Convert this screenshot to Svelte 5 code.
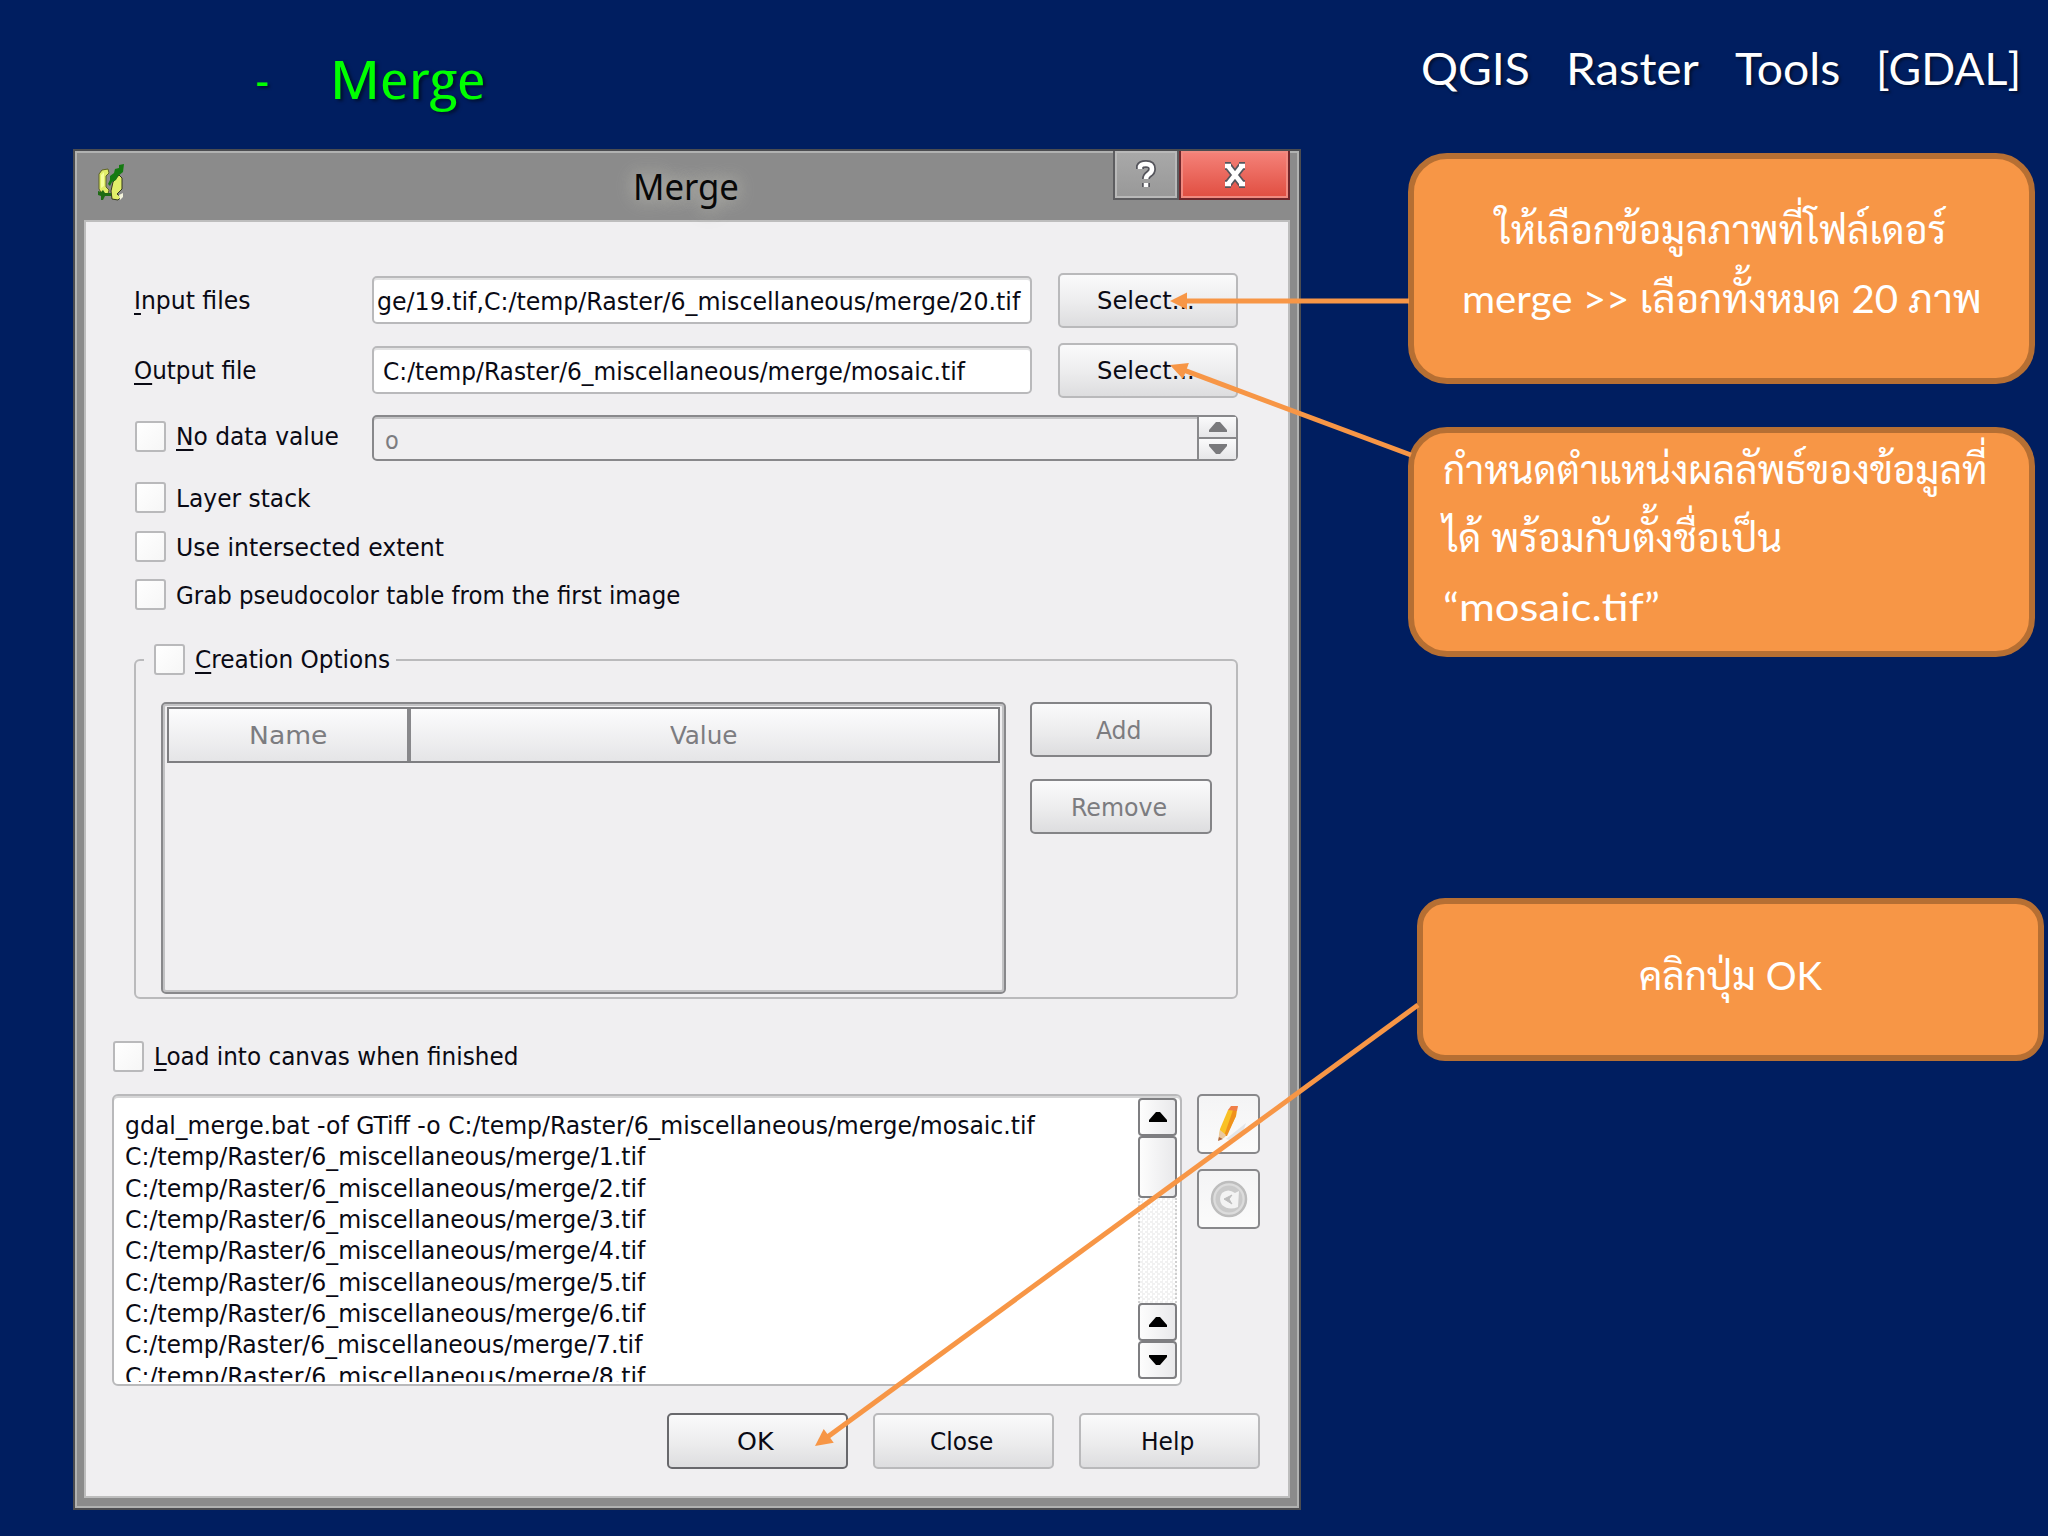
<script lang="ts">
  const folder = 'C:/temp/Raster/6_miscellaneous/merge/';

  const options = [
    { label: 'Layer stack', width: 135 },
    { label: 'Use intersected extent', width: 268 },
    { label: 'Grab pseudocolor table from the first image', width: 504 }
  ];

  const command = [
    { text: `gdal_merge.bat -of GTiff -o ${folder}mosaic.tif`, width: 910 },
    ...[1, 2, 3, 4, 5, 6, 7, 8].map((n) => ({
      text: `${folder}${n}.tif`,
      width: n === 7 ? 517 : 520
    }))
  ];

  const arrows = [
    { from: [1409, 301], to: [1170, 301] },
    { from: [1411, 455], to: [1170, 365] },
    { from: [1418, 1005], to: [815, 1446] }
  ].map(({ from, to }) => {
    const angle = Math.atan2(to[1] - from[1], to[0] - from[0]);
    return {
      x1: from[0],
      y1: from[1],
      x2: to[0] - 12 * Math.cos(angle),
      y2: to[1] - 12 * Math.sin(angle),
      head: `translate(${to[0]} ${to[1]}) rotate(${(angle * 180) / Math.PI})`
    };
  });

  // squeeze or stretch a line of text to the given width
  function fit(node: HTMLElement, width: number) {
    const natural = node.offsetWidth;
    node.style.transform = `scaleX(${width / natural})`;
    node.style.marginRight = `${width - natural}px`;
  }
</script>

{#snippet line(text: string, width: number, key = false)}
  <span class="fit" use:fit={width}>{#if key}<u>{text[0]}</u>{text.slice(1)}{:else}{text}{/if}</span>
{/snippet}

{#snippet triangle(down = false)}
  <svg class="triangle" class:down width="18" height="10" viewBox="0 0 18 10">
    <path d="M9 0 L11 0 L18 8 V10 H0 V8 L7 0 Z" />
  </svg>
{/snippet}

<div class="slide">
  <header>
    <h2><span class="dash">-</span>{@render line('Merge', 156)}</h2>
    <h1>
      {@render line('QGIS', 109)}
      {@render line('Raster', 133)}
      {@render line('Tools', 105)}
      {@render line('[GDAL]', 145)}
    </h1>
  </header>

  <main>
    <section class="window">
      <div class="titlebar">
        <svg class="logo" width="28" height="38" viewBox="0 0 28 38">
          <path d="M2 10 L5 6 L11 5 L12 9 L9 12 L9 23 L12 26 L11 30 L5 30 L2 25 Z" fill="#e2ee6a" stroke="#5d6224" />
          <path d="M16 18 L22 11 L25 14 V25 L20 30 L24 33 L21 36 L15 35 L14 27 Z" fill="#e2ee6a" stroke="#33371c" />
          <path d="M4 11 L7 8 L7 22 L4 24 Z" fill="#f6ff9c" />
          <path d="M11 20 L13 16 L13 12 L17 9 L18 5 L22 4 L22 1 L27 0 L26 8 L21 12 L19 16 L15 18 L13 22 Z" fill="#157a12" />
          <path d="M1 27 L4 28 L6 26 L8 29 L14 29 L14 32 L8 32 L6 36 L4 36 L4 32 L1 31 Z" fill="#1f6b14" />
          <path d="M22 31 L26 29 L26 33 L23 36 Z" fill="#f4f4dc" />
        </svg>
        <span class="title">{@render line('Merge', 106)}</span>
        <div class="controls">
          <button class="help" aria-label="Help">
            <svg width="22" height="30" viewBox="0 0 22 30">
              <path d="M5 9 V6.500 Q6 4 11 4 Q17 4 17 9 Q17 12 14 14 Q11 16 11 19 M11 23 V27" />
              <path class="top" d="M5 9 V6.500 Q6 4 11 4 Q17 4 17 9 Q17 12 14 14 Q11 16 11 19 M11 23 V27" />
            </svg>
          </button>
          <button class="close" aria-label="Close">
            <svg width="28" height="26" viewBox="0 0 28 26">
              <path d="M7 4 L21 22 M21 4 L7 22 M4 4 H10 M18 4 H24 M4 22 H10 M18 22 H24" />
              <path class="top" d="M7 4 L21 22 M21 4 L7 22 M4 4 H10 M18 4 H24 M4 22 H10 M18 22 H24" />
            </svg>
          </button>
        </div>
      </div>

      <div class="body">
        <div class="row">
          <span class="label">{@render line('Input files', 116, true)}</span>
          <div class="field scrolled">{@render line(`ge/19.tif,${folder}20.tif`, 643)}</div>
          <button class="push">{@render line('Select...', 98)}</button>
        </div>
        <div class="row second">
          <span class="label">{@render line('Output file', 123, true)}</span>
          <div class="field">{@render line(`${folder}mosaic.tif`, 582)}</div>
          <button class="push">{@render line('Select...', 98)}</button>
        </div>
        <div class="row nodata">
          <label class="check label"><i></i>{@render line('No data value', 163, true)}</label>
          <div class="spin">
            <span class="zero">o</span>
            <div class="steps">
              <b>{@render triangle()}</b>
              <b>{@render triangle(true)}</b>
            </div>
          </div>
        </div>

        <div class="options">
          {#each options as option}
            <label class="check"><i></i>{@render line(option.label, option.width)}</label>
          {/each}
        </div>

        <fieldset>
          <legend class="check"><i></i>{@render line('Creation Options', 195, true)}</legend>
          <div class="creation">
            <div class="table">
              <div class="head">
                <span class="name">{@render line('Name', 78)}</span>
                <span class="value">{@render line('Value', 68)}</span>
              </div>
            </div>
            <div class="side">
              <button class="push disabled">{@render line('Add', 46)}</button>
              <button class="push disabled">{@render line('Remove', 96)}</button>
            </div>
          </div>
        </fieldset>

        <label class="check load"><i></i>{@render line('Load into canvas when finished', 364, true)}</label>

        <div class="output">
          <div class="log">
            <div class="lines">
              {#each command as entry}
                <div>{@render line(entry.text, entry.width)}</div>
              {/each}
            </div>
            <div class="scrollbar">
              <b>{@render triangle()}</b>
              <b class="thumb"></b>
              <span class="track"></span>
              <b>{@render triangle()}</b>
              <b>{@render triangle(true)}</b>
            </div>
          </div>
          <div class="tools">
            <button aria-label="Edit">
              <svg width="42" height="46" viewBox="0 0 42 46">
                <path d="M18 38 L38 22 L34 34 L24 40 Z" fill="#dcdee2" opacity="0.7" />
                <path d="M20 9 L29 6 L28 15 L18 35 L11 38 L12 28 Z" fill="#f9c125" />
                <path d="M25 9 L29 7 L28 15 L19 35 L16 35 Z" fill="#f0921c" />
                <path d="M20 9 L23 5 L30 5 L29 10 Z" fill="#f07f48" />
                <path d="M12 29 L18 34 L16 37 L10 39 Z" fill="#ebc9a0" />
                <path d="M10 40 L11 36 L15 38 Z" fill="#b0683f" />
              </svg>
            </button>
            <button aria-label="Reset">
              <svg width="42" height="42" viewBox="0 0 42 42">
                <circle cx="21" cy="21" r="17" fill="#dcdcdc" stroke="#bdbdbd" stroke-width="2.500" />
                <circle cx="21" cy="21" r="13.500" fill="#cacaca" />
                <path d="M31 13 L30 29 Q21 33 14 27 Q10 21 14 15 Q20 10 27 15 Z" fill="#f3f3f3" />
                <path d="M24 17 L16 21 L24 26 L21 21 Z" fill="#bdbdbd" stroke="#bdbdbd" />
              </svg>
            </button>
          </div>
        </div>

        <div class="buttons">
          <button class="push default">{@render line('OK', 36)}</button>
          <button class="push">{@render line('Close', 63)}</button>
          <button class="push">{@render line('Help', 53)}</button>
        </div>
      </div>
    </section>

    <aside>
      <div class="note first">
        <p>{@render line('ให้เลือกข้อมูลภาพที่โฟล์เดอร์', 450)}</p>
        <p>{@render line('merge >> เลือกทั้งหมด 20 ภาพ', 520)}</p>
      </div>
      <div class="note left">
        <p>{@render line('กำหนดตำแหน่งผลลัพธ์ของข้อมูลที่', 544)}</p>
        <p>{@render line('ได้ พร้อมกับตั้งชื่อเป็น', 339)}</p>
        <p>{@render line('“mosaic.tif”', 217)}</p>
      </div>
      <div class="note last">
        <p>{@render line('คลิกปุ่ม OK', 183)}</p>
      </div>
    </aside>
  </main>

  <svg class="arrows" width="2048" height="1536" viewBox="0 0 2048 1536">
    {#each arrows as arrow}
      <line x1={arrow.x1} y1={arrow.y1} x2={arrow.x2} y2={arrow.y2} />
      <path d="M0 0 L-17 -8.500 V8.500 Z" transform={arrow.head} />
    {/each}
  </svg>
</div>

<style>
  :global(body) {
    background: #001e60;
  }

  .slide {
    position: relative;
    box-sizing: border-box;
    width: 2048px;
    height: 1536px;
    overflow: hidden;
    background: #001e60;
    font-family: 'DejaVu Sans Condensed', 'DejaVu Sans', sans-serif;
    font-stretch: condensed;
    font-size: 25px;
    color: #0a0a14;
  }

  .slide :global(*) {
    box-sizing: border-box;
  }

  .fit {
    display: inline-block;
    flex: none;
    transform-origin: 0 50%;
    white-space: pre;
  }

  u {
    text-decoration-thickness: 2px;
    text-underline-offset: 4px;
  }

  header {
    display: flex;
    justify-content: space-between;
    height: 149px;
    padding: 0 27px 0 256px;
    font-weight: 400;
  }

  h1,
  h2 {
    margin: 0;
    font-weight: 400;
    text-shadow: 2px 2px 3px rgba(0, 0, 0, 0.5);
  }

  h2 {
    display: flex;
    padding-top: 46px;
    font-family: 'Open Sans', sans-serif;
    font-size: 53px;
    line-height: 66px;
    color: #00ff00;
  }

  .dash {
    width: 74px;
    font-size: 46px;
  }

  h1 {
    display: flex;
    gap: 36px;
    padding-top: 39px;
    font-family: Lato, sans-serif;
    font-size: 45px;
    font-weight: 400;
    line-height: 58px;
    color: #fff;
  }

  main {
    display: flex;
    align-items: flex-start;
    padding-left: 73px;
  }

  .window {
    width: 1228px;
    height: 1361px;
    padding: 0 9px;
    border: 2px solid #4b4c50;
    background: #8b8b8b;
    box-shadow: inset 0 0 0 2px #b1b2b1;
  }

  .titlebar {
    display: grid;
    grid-template-columns: 1fr auto 1fr;
    height: 69px;
    padding-left: 13px;
  }

  .logo {
    margin-top: 13px;
  }

  .title {
    margin: 0 8px 0 -8px;
    font-family: 'Noto Sans', 'Open Sans', sans-serif;
    font-size: 36px;
    line-height: 71px;
    color: #080808;
    text-shadow: 0 0 16px #b6b6ae, 0 0 24px #b6b6ae;
  }

  .controls {
    display: flex;
    justify-content: flex-end;
    height: 49px;
  }

  .controls button {
    display: flex;
    align-items: center;
    justify-content: center;
    padding: 0;
    border: 2px solid #5d5d60;
    border-top: 0;
  }

  .controls .help {
    width: 66px;
    background: linear-gradient(#a9a9a9, #989898);
    box-shadow: inset 0 0 0 2px #b9b9b9;
  }

  .controls .close {
    width: 111px;
    border-color: #70262a;
    background: linear-gradient(#f5837a, #e04d40);
    box-shadow: inset 0 0 0 2px #f08a80;
  }

  .controls path {
    fill: none;
    stroke: #55555c;
    stroke-width: 8;
  }

  .controls path.top {
    stroke: #fff;
    stroke-width: 4.5;
  }

  .body {
    display: flex;
    flex-direction: column;
    height: 1278px;
    padding: 51px 50px 0 48px;
    border: 2px solid #bdbdbd;
    background: #f0eff1;
  }

  .row {
    display: flex;
    flex: none;
    align-items: center;
    height: 54px;
  }

  .row.second {
    margin-top: 16px;
  }

  .row.nodata {
    height: 45px;
    margin-top: 18px;
  }

  .row.nodata .check {
    margin-bottom: 3px;
  }

  .label {
    width: 238px;
  }

  .field {
    display: flex;
    align-items: center;
    width: 660px;
    height: 48px;
    margin-right: 26px;
    padding: 2px 0 0 9px;
    border: 2px solid #b9b9bb;
    border-radius: 5px;
    background: #fff;
    box-shadow: inset 0 2px 0 #e2e2e3;
  }

  .field.scrolled {
    padding-left: 3px;
  }

  .push {
    display: flex;
    align-items: center;
    justify-content: center;
    width: 180px;
    height: 55px;
    padding: 1px 4px 0 0;
    border: 2px solid #b9b9bb;
    border-radius: 5px;
    background: linear-gradient(#fafafb, #ececed 55%, #dddddf);
    font: inherit;
    color: #0a0a14;
  }

  .push.disabled {
    border-color: #848487;
    color: #7c7c80;
  }

  .push.default {
    border-color: #68686c;
  }

  .check {
    display: flex;
    align-items: center;
    height: 31px;
  }

  .check i {
    flex: none;
    width: 31px;
    height: 31px;
    margin: 0 10px 0 1px;
    border: 2px solid #b9b9bb;
    border-radius: 3px;
    background: linear-gradient(135deg, #fff, #f6f6f6);
  }

  .spin {
    display: flex;
    align-items: center;
    width: 866px;
    height: 46px;
    border: 2px solid #88888b;
    border-radius: 5px;
    box-shadow: inset 0 2px 0 #c4c4c6;
  }

  .zero {
    flex: 1;
    padding: 5px 0 0 11px;
    color: #7c7c80;
  }

  .steps {
    display: grid;
    width: 39px;
    height: 100%;
    border-left: 2px solid #88888b;
    fill: #79797c;
  }

  .steps b {
    display: flex;
    align-items: center;
    justify-content: center;
    background: linear-gradient(#fafafb, #e6e6e8);
  }

  .steps b + b {
    border-top: 2px solid #88888b;
  }

  .triangle.down {
    transform: rotate(180deg);
  }

  .options {
    display: grid;
    gap: 17.5px;
    margin-top: 22px;
  }

  .options .fit {
    padding-top: 2px;
  }

  fieldset {
    flex: none;
    width: 1104px;
    height: 355px;
    margin: 34px 0 0;
    padding: 0 0 0 8px;
    border: 2px solid #bababc;
    border-radius: 6px;
  }

  legend {
    padding: 0 6px 0 9px;
  }

  .creation {
    display: flex;
    gap: 24px;
    padding: 27px 0 0 17px;
  }

  .table {
    width: 845px;
    height: 292px;
    padding: 3px 4px;
    border: 2px solid #88888b;
    border-radius: 5px;
    box-shadow: inset 0 0 0 2px #c2c2c4;
  }

  .head {
    display: flex;
    height: 56px;
    border: 2px solid #7e7e81;
    background: linear-gradient(#fcfcfd, #e5e5e7);
    color: #7c7c80;
  }

  .head span {
    display: flex;
    align-items: center;
    justify-content: center;
  }

  .head .name {
    width: 242px;
    border-right: 4px solid #88888b;
  }

  .head .value {
    flex: 1;
    padding-right: 2px;
  }

  .side {
    display: grid;
    align-content: start;
    gap: 22px;
  }

  .side .push {
    width: 182px;
    height: 55px;
  }

  .load {
    margin: 42px 0 0 -22px;
  }

  .output {
    display: flex;
    flex: none;
    gap: 15px;
    height: 292px;
    margin: 22px -24px 0 -22px;
  }

  .log {
    display: flex;
    width: 1070px;
    padding: 3px;
    border: 2px solid #b9b9bb;
    border-radius: 6px;
    background: #fff;
    box-shadow: inset 0 2px 0 #d6d6d7;
  }

  .lines {
    flex: 1;
    height: 283px;
    padding: 11px 0 0 8px;
    overflow: hidden;
    line-height: 31.35px;
  }

  .lines div {
    height: 31.35px;
  }

  .scrollbar {
    display: grid;
    grid-template-rows: 38px 62px 1fr 38px 38px;
    width: 39px;
    margin: -1px 0 2px;
  }

  .scrollbar b {
    display: flex;
    align-items: center;
    justify-content: center;
    border: 2px solid #7e7e81;
    border-radius: 4px;
    background: linear-gradient(90deg, #fdfdfd, #e9e9eb);
  }

  .track {
    border: 2px dotted #cfcfcf;
    border-width: 0 2px;
    background: repeating-conic-gradient(#f1f1f1 0 25%, #fff 0 50%) 0 0 / 5px 5px;
  }

  .tools {
    display: grid;
    align-content: start;
    gap: 15px;
  }

  .tools button {
    display: flex;
    align-items: center;
    justify-content: center;
    width: 63px;
    height: 60px;
    padding: 0;
    border: 2px solid #88888b;
    border-radius: 5px;
    background: linear-gradient(#f4f4f5, #fbfbfb);
  }

  .buttons {
    display: flex;
    justify-content: flex-end;
    gap: 25px;
    margin: 27px -22px 0 0;
  }

  .buttons .push {
    width: 181px;
    height: 56px;
  }

  aside {
    padding: 4px 0 0 107px;
    font-family: Lato, 'TH Sarabun New', Sarabun, 'Noto Sans Thai Looped', 'Noto Looped Thai', Loma, Garuda, Waree, 'Noto Serif Thai', sans-serif;
    font-size: 39px;
    line-height: 68.5px;
    color: #fff;
  }

  .note {
    display: flex;
    flex-direction: column;
    align-items: center;
    justify-content: center;
    width: 627px;
    height: 231px;
    border: 6px solid #b66f33;
    border-radius: 39px;
    background: #f79646;
  }

  .note p {
    height: 68.5px;
    margin: 0;
  }

  .note.first {
    padding-bottom: 10px;
  }

  .note.left {
    align-items: flex-start;
    height: 230px;
    margin-top: 43px;
    padding: 0 0 9px 29px;
  }

  .note.last {
    height: 163px;
    margin: 241px 0 0 9px;
    padding-bottom: 8px;
    border-radius: 28px;
  }

  .arrows {
    position: absolute;
    inset: 0;
    fill: #f79646;
    stroke: none;
  }

  .arrows line {
    stroke: #f79646;
    stroke-width: 5;
  }
</style>
